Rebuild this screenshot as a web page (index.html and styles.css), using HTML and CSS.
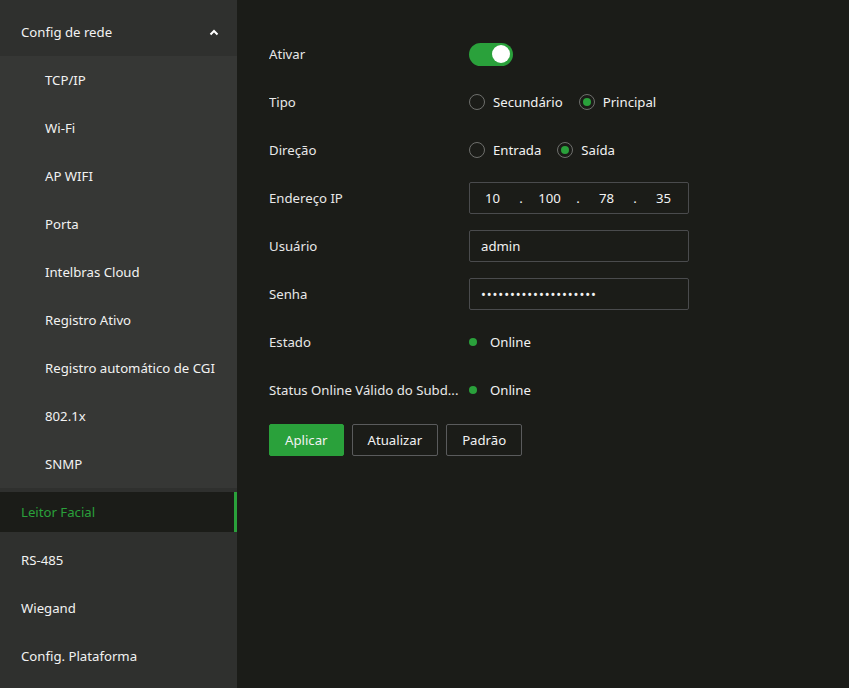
FILE: index.html
```html
<!DOCTYPE html>
<html lang="pt-BR">
<head>
    <meta charset="UTF-8">
    <link rel="stylesheet" href="styles.css">
    <title>Leitor Facial</title>
</head>
<body>
    <div class="sidebar">
        <div class="menu-head">
            <span>Config de rede</span>
            <svg class="chevron" width="10" height="7" viewBox="0 0 10 7"><polyline points="1.5,5.5 5,2 8.5,5.5" fill="none" stroke="#fff" stroke-width="2"/></svg>
        </div>
        <div class="submenu">
            <div class="sub-item">TCP/IP</div>
            <div class="sub-item">Wi-Fi</div>
            <div class="sub-item">AP WIFI</div>
            <div class="sub-item">Porta</div>
            <div class="sub-item">Intelbras Cloud</div>
            <div class="sub-item">Registro Ativo</div>
            <div class="sub-item">Registro automático de CGI</div>
            <div class="sub-item">802.1x</div>
            <div class="sub-item">SNMP</div>
        </div>
        <div class="menu-item active">Leitor Facial</div>
        <div class="menu-item">RS-485</div>
        <div class="menu-item">Wiegand</div>
        <div class="menu-item">Config. Plataforma</div>
    </div>

    <div class="content">
        <div class="row">
            <div class="label">Ativar</div>
            <div class="switch"><span class="knob"></span></div>
        </div>
        <div class="row">
            <div class="label">Tipo</div>
            <div class="radio-group">
                <span class="radio"></span><span class="radio-text">Secundário</span>
                <span class="radio checked"></span><span class="radio-text">Principal</span>
            </div>
        </div>
        <div class="row">
            <div class="label">Direção</div>
            <div class="radio-group">
                <span class="radio"></span><span class="radio-text">Entrada</span>
                <span class="radio checked"></span><span class="radio-text">Saída</span>
            </div>
        </div>
        <div class="row">
            <div class="label">Endereço IP</div>
            <div class="field ip-field">
                <span class="octet">10</span><span class="dot">.</span>
                <span class="octet">100</span><span class="dot">.</span>
                <span class="octet">78</span><span class="dot">.</span>
                <span class="octet">35</span>
            </div>
        </div>
        <div class="row">
            <div class="label">Usuário</div>
            <div class="field">admin</div>
        </div>
        <div class="row">
            <div class="label">Senha</div>
            <div class="field password">••••••••••••••••••••</div>
        </div>
        <div class="row">
            <div class="label">Estado</div>
            <div class="status"><span class="status-dot"></span>Online</div>
        </div>
        <div class="row">
            <div class="label" title="Status Online Válido do Subdispositivo">Status Online Válido do Subd...</div>
            <div class="status"><span class="status-dot"></span>Online</div>
        </div>
        <div class="buttons">
            <button class="btn primary">Aplicar</button>
            <button class="btn">Atualizar</button>
            <button class="btn">Padrão</button>
        </div>
    </div>
</body>
</html>
```

FILE: styles.css
```css
* {
    box-sizing: border-box;
}

body {
    margin: 0;
    display: flex;
    height: 688px;
    overflow: hidden;
    background-color: #1b1c18;
    font-family: "Noto Sans", "Open Sans", sans-serif;
    font-size: 13.2px;
    color: #f2f2f2;
}

.sidebar {
    width: 237px;
    flex-shrink: 0;
    display: flex;
    flex-direction: column;
    background-color: #2f302e;
    padding-top: 8px;
}

.menu-head {
    height: 48px;
    flex-shrink: 0;
    display: flex;
    align-items: center;
    justify-content: space-between;
    padding: 0 18px 0 21px;
}

.submenu {
    background-color: #363735;
}

.sub-item {
    height: 48px;
    display: flex;
    align-items: center;
    padding-left: 45px;
}

.menu-item {
    height: 40px;
    flex-shrink: 0;
    margin: 4px 0;
    display: flex;
    align-items: center;
    padding-left: 21px;
}

.menu-item.active {
    background-color: #1b1c18;
    color: #2aa13b;
    border-right: 3px solid #2aa13b;
}

.content {
    flex: 1;
    padding: 30px 0 0 32px;
}

.row {
    height: 48px;
    display: flex;
    align-items: center;
}

.label {
    width: 200px;
    flex-shrink: 0;
    padding-right: 6px;
    white-space: nowrap;
    overflow: hidden;
    text-overflow: ellipsis;
    color: #e8e8e8;
}

.switch {
    width: 44px;
    height: 23px;
    border-radius: 12px;
    background-color: #2aa13b;
    display: flex;
    align-items: center;
    justify-content: flex-end;
    padding-right: 3px;
}

.knob {
    width: 18px;
    height: 18px;
    border-radius: 50%;
    background-color: #fff;
}

.radio-group {
    display: flex;
    align-items: center;
}

.radio {
    width: 16px;
    height: 16px;
    border-radius: 50%;
    border: 1px solid #6e6f6c;
    display: flex;
    align-items: center;
    justify-content: center;
    margin-right: 8px;
}

.radio.checked::after {
    content: "";
    width: 8px;
    height: 8px;
    border-radius: 50%;
    background-color: #2aa13b;
}

.radio-text {
    margin-right: 16px;
}

.field {
    width: 220px;
    height: 32px;
    border: 1px solid #4a4b4d;
    border-radius: 2px;
    display: flex;
    align-items: center;
    padding-left: 11px;
}

.password {
    font-size: 13px;
    letter-spacing: 0.9px;
}

.ip-field {
    padding-left: 0;
}

.octet {
    width: 45px;
    text-align: center;
}

.dot {
    width: 12px;
    text-align: center;
}

.status {
    display: flex;
    align-items: center;
}

.status-dot {
    width: 8px;
    height: 8px;
    border-radius: 50%;
    background-color: #2aa13b;
    margin-right: 13px;
}

.buttons {
    display: flex;
    gap: 8px;
    margin-top: 10px;
}

.btn {
    height: 32px;
    padding: 0 15px;
    font-family: inherit;
    font-size: 13.2px;
    color: #f2f2f2;
    background-color: transparent;
    border: 1px solid #5a5b5c;
    border-radius: 2px;
}

.btn.primary {
    background-color: #2aa13b;
    border-color: #2aa13b;
}
```
